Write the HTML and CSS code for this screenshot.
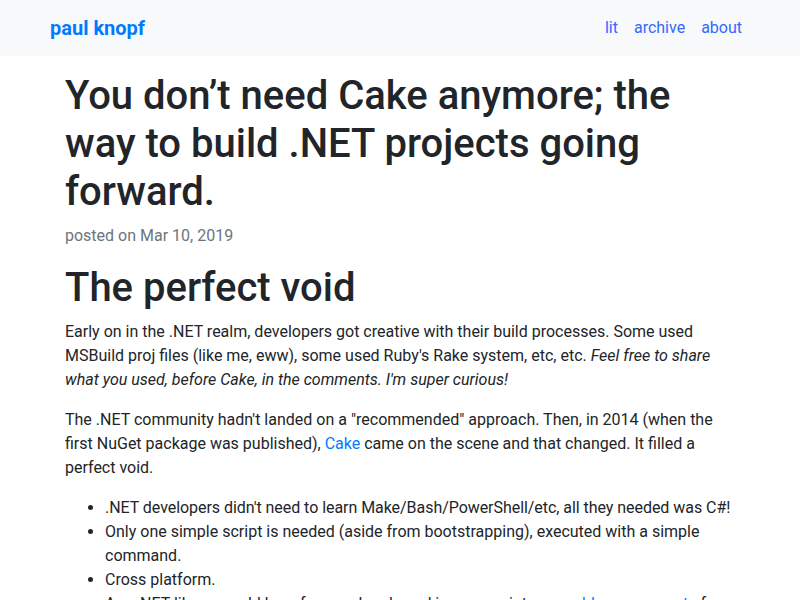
FILE: index.html
```html
<!DOCTYPE html>
<html lang="en">
<head>
<meta charset="utf-8">
<title>You don’t need Cake anymore</title>
<link rel="stylesheet" href="styles.css">
</head>
<body>
<nav class="navbar">
  <div class="container nav-inner">
    <a class="brand" href="#">paul knopf</a>
    <ul class="nav-links">
      <li><a href="#">lit</a></li>
      <li><a href="#">archive</a></li>
      <li><a href="#">about</a></li>
    </ul>
  </div>
</nav>
<main class="container content">
  <h1 class="post-title">You don’t need Cake anymore; the way to build .NET projects going forward.</h1>
  <p class="meta">posted on Mar 10, 2019</p>
  <h1 class="section">The perfect void</h1>
  <p>Early on in the .NET realm, developers got creative with their build processes. Some used MSBuild proj files (like me, eww), some used Ruby's Rake system, etc, etc. <em>Feel free to share what you used, before Cake, in the comments. I'm super curious!</em></p>
  <p>The .NET community hadn't landed on a "recommended" approach. Then, in 2014 (when the first NuGet package was published), <a href="#">Cake</a> came on the scene and that changed. It filled a perfect void.</p>
  <ul>
    <li class="tight">.NET developers didn't need to learn Make/Bash/PowerShell/etc, all they needed was C#!</li>
    <li>Only one simple script is needed (aside from bootstrapping), executed with a simple command.</li>
    <li>Cross platform.</li>
    <li>Any .NET library could be referenced and used in your scripts, <a href="#">reusable components</a> for common tasks, the build ecosystem.</li>
  </ul>
</main>
</body>
</html>
```
FILE: styles.css
```css
* { box-sizing: border-box; }
html, body { margin: 0; padding: 0; }
body {
  font-family: Roboto, "Liberation Sans", sans-serif;
  font-size: 16px;
  line-height: 1.5;
  color: #212529;
  background: #fff;
}
a { color: #007bff; text-decoration: none; }
.container {
  max-width: 700px;
  margin: 0 auto;
}
.navbar {
  background: #f8f9fa;
  height: 56px;
}
.nav-inner {
  display: flex;
  align-items: center;
  justify-content: space-between;
  height: 56px;
}
.brand {
  font-size: 20px;
  font-weight: 700;
  line-height: 30px;
  color: #007bff;
}
.nav-links {
  display: flex;
  list-style: none;
  margin: 0;
  padding: 0;
}
.nav-links a {
  display: block;
  padding: 8px;
  color: #2f6bff;
}
.content {
  padding: 16px 15px 0;
}
h1 {
  font-size: 40px;
  font-weight: 500;
  line-height: 1.2;
  margin: 0 0 8px;
}
.section { margin-top: 16px; }
.meta { color: #6c757d; margin: 0; }
p { margin: 0 0 16px; }
ul { margin: 0 0 16px; padding-left: 40px; }
.tight { letter-spacing: -0.05px; }
```
